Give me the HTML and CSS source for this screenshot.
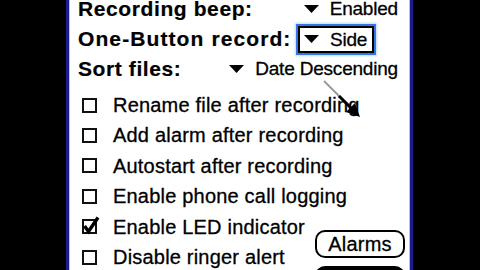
FILE: index.html
```html
<!DOCTYPE html>
<html>
<head>
<meta charset="utf-8">
<link rel="stylesheet" href="styles.css">
</head>
<body>
<div class="device">
  <div class="bezel"></div>
  <div class="screen">
    <div class="setting first">
      <span class="label">Recording beep:</span>
      <span class="trigger right"><svg class="tri" viewBox="0 0 15 8"><polygon points="0,0 15,0 7.5,8"/></svg><span>Enabled</span></span>
    </div>
    <div class="setting">
      <span class="label wide">One-Button record:</span>
      <span class="trigger boxed"><svg class="tri" viewBox="0 0 15 8"><polygon points="0,0 15,0 7.5,8"/></svg><span>Side</span></span>
    </div>
    <div class="setting">
      <span class="label">Sort files:</span>
      <span class="trigger right"><svg class="tri" viewBox="0 0 15 8"><polygon points="0,0 15,0 7.5,8"/></svg><span>Date Descending</span></span>
    </div>

    <div class="checks">
      <div class="check-row"><span class="box"></span><span>Rename file after recording</span></div>
      <div class="check-row"><span class="box"></span><span>Add alarm after recording</span></div>
      <div class="check-row"><span class="box"></span><span>Autostart after recording</span></div>
      <div class="check-row"><span class="box"></span><span>Enable phone call logging</span></div>
      <div class="bottom">
        <div class="bottom-left">
          <div class="check-row"><svg class="box checked" viewBox="0 0 15 15"><rect x="1" y="1" width="13" height="13"/><polyline points="2.5,7 6.5,12.5 16,-1.5"/></svg><span>Enable LED indicator</span></div>
          <div class="check-row"><span class="box"></span><span>Disable ringer alert</span></div>
        </div>
        <div class="buttons">
          <div class="btn">Alarms</div>
          <div class="btn dark">&nbsp;</div>
        </div>
      </div>
    </div>
  </div>
  <div class="bezel"></div>
</div>
<svg class="pointer" viewBox="0 0 480 270" width="480" height="270">
  <line x1="324" y1="81" x2="340" y2="97" stroke="#9a9a9a" stroke-width="2"/>
  <line x1="339" y1="96" x2="352" y2="109" stroke="#000" stroke-width="3"/>
  <polygon points="360,117 346,112 355,103" fill="#000"/>
</svg>
</body>
</html>
```

FILE: styles.css
```css
html, body {
  margin: 0;
  padding: 0;
}
body {
  width: 480px;
  height: 270px;
  overflow: hidden;
  background: #000;
  position: relative;
  font-family: "Liberation Sans", Arial, sans-serif;
  color: #000;
}
.device {
  display: flex;
  height: 270px;
}
.bezel {
  width: 66px;
  flex: 0 0 66px;
  background: #000;
}
.screen {
  width: 332px;
  flex: 0 0 332px;
  height: 270px;
  overflow: hidden;
  background: #fff;
  border-left: 3px solid #1c1c92;
  border-right: 3px solid #1c1c92;
  padding-left: 9px;
  box-shadow: inset 1px 0 0 #b9bdf0, inset -1px 0 0 #b9bdf0;
}
.setting {
  display: flex;
  align-items: center;
  height: 30px;
  line-height: 30px;
}
.setting.first {
  margin-top: -6px;
}
.label {
  font-weight: bold;
  font-size: 21px;
  letter-spacing: 0.6px;
  white-space: nowrap;
  -webkit-text-stroke: 0.2px #000;
}
.label.wide {
  width: 220px;
  flex: 0 0 220px;
  letter-spacing: 1.1px;
}
.trigger {
  display: inline-flex;
  align-items: center;
  gap: 11px;
  font-size: 19px;
  letter-spacing: -0.2px;
  white-space: nowrap;
  -webkit-text-stroke: 0.3px #000;
}
.trigger.right {
  margin-left: auto;
  margin-right: 12px;
}
.tri {
  width: 15px;
  height: 8px;
  flex: 0 0 15px;
}
.tri polygon {
  fill: #000;
}
.trigger.boxed {
  height: 27px;
  box-sizing: border-box;
  border: 2px solid #000;
  padding: 0 5px 0 4px;
  line-height: 23px;
  box-shadow: 0 0 0 2px #2f7ae0, 0 0 2px 3px rgba(120, 170, 255, 0.45);
}
.checks {
  margin-top: 6px;
}
.check-row {
  display: flex;
  align-items: center;
  height: 30.4px;
  line-height: 30.4px;
  font-size: 20px;
  letter-spacing: 0.2px;
  white-space: nowrap;
  -webkit-text-stroke: 0.3px #000;
}
.box {
  display: block;
  width: 15px;
  height: 15px;
  flex: 0 0 15px;
  box-sizing: border-box;
  border: 2px solid #111;
  margin-left: 4px;
  margin-right: 16px;
}
svg.box {
  border: none;
  overflow: visible;
}
svg.box rect {
  fill: none;
  stroke: #111;
  stroke-width: 2;
}
svg.box polyline {
  fill: none;
  stroke: #000;
  stroke-width: 3.4;
  stroke-linejoin: miter;
}
.bottom {
  display: flex;
}
.bottom-left {
  flex: 1;
}
.buttons {
  display: flex;
  flex-direction: column;
  gap: 8px;
  width: 90px;
  margin-right: 5px;
  padding-top: 18.4px;
}
.btn {
  height: 28px;
  box-sizing: border-box;
  border: 2px solid #000;
  border-radius: 10px;
  font-size: 20px;
  line-height: 24px;
  text-align: center;
  letter-spacing: 0.2px;
  -webkit-text-stroke: 0.3px #000;
}
.btn.dark {
  background: #000;
}
.pointer {
  position: absolute;
  left: 0;
  top: 0;
  pointer-events: none;
}
```
